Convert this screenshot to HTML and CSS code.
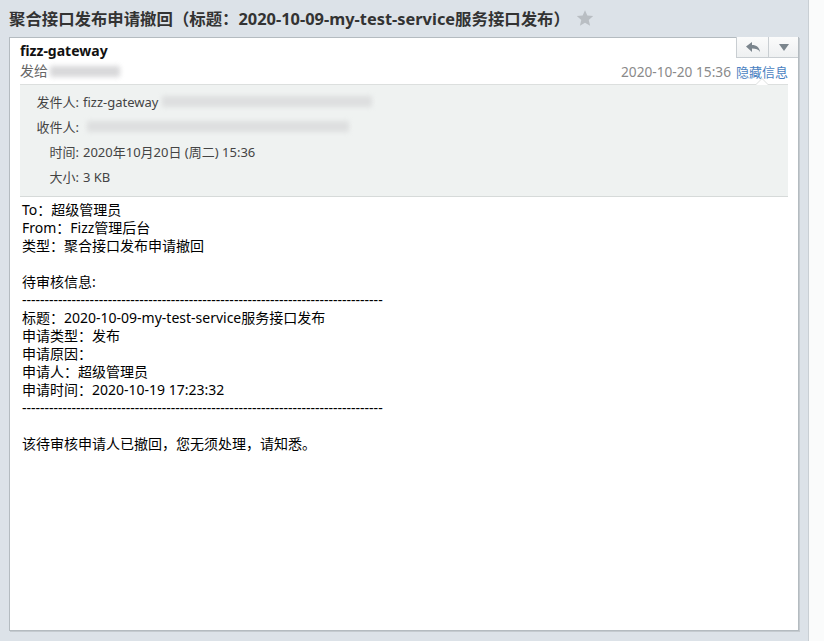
FILE: index.html
```html
<!DOCTYPE html>
<html lang="zh-CN">
<head>
<meta charset="utf-8">
<title>聚合接口发布申请撤回</title>
<link rel="stylesheet" href="styles.css">
</head>
<body>
<div class="page">
  <main class="main">
    <div class="subject">
      <h1 class="subject-text">聚合接口发布申请撤回（标题：2020-10-09-my-test-service服务接口发布）</h1>
      <svg class="star" width="18" height="18" viewBox="0 0 24 24"><path d="M12 1.5l3.1 7.2 7.8.7-5.9 5.2 1.8 7.7L12 18.3l-6.8 4 1.8-7.7-5.9-5.2 7.8-.7z" fill="#b9bec3"/></svg>
    </div>
    <section class="card">
      <header class="head">
        <div class="head-left">
          <div class="sender">fizz-gateway</div>
          <div class="to">发给<span class="blur blur-to"></span></div>
        </div>
        <div class="head-right">
          <div class="btns">
            <button class="btn btn-reply"><svg width="16" height="12" viewBox="0 0 16 12"><path d="M1 5.5L7 1v3c4.5 0 7.5 2.2 8 7-1.6-2.6-4-3.4-8-3.4V11z" fill="#7b858d"/></svg></button>
            <button class="btn btn-more"><svg width="10" height="7" viewBox="0 0 10 7"><path d="M0 0h10L5 7z" fill="#7b858d"/></svg></button>
          </div>
          <div class="meta"><span class="date">2020-10-20 15:36</span><a class="toggle">隐藏信息</a></div>
        </div>
      </header>
      <div class="details">
        <div class="row"><span class="lbl">发件人:</span><span class="val">fizz-gateway<span class="blur blur-from"></span></span></div>
        <div class="row"><span class="lbl">收件人:</span><span class="val"><span class="blur blur-rcpt"></span></span></div>
        <div class="row"><span class="lbl">时间:</span><span class="val">2020年10月20日 (周二) 15:36</span></div>
        <div class="row"><span class="lbl">大小:</span><span class="val">3 KB</span></div>
      </div>
      <div class="body">
        <p class="line">To：超级管理员</p>
        <p class="line">From：Fizz管理后台</p>
        <p class="line">类型：聚合接口发布申请撤回</p>
        <p class="line">&nbsp;</p>
        <p class="line">待审核信息:</p>
        <p class="line">--------------------------------------------------------------------------------</p>
        <p class="line">标题：2020-10-09-my-test-service服务接口发布</p>
        <p class="line">申请类型：发布</p>
        <p class="line">申请原因：</p>
        <p class="line">申请人：超级管理员</p>
        <p class="line">申请时间：2020-10-19 17:23:32</p>
        <p class="line">--------------------------------------------------------------------------------</p>
        <p class="line">&nbsp;</p>
        <p class="line">该待审核申请人已撤回，您无须处理，请知悉。</p>
      </div>
    </section>
  </main>
  <aside class="strip"></aside>
</div>
</body>
</html>
```
FILE: styles.css
```css
* { box-sizing: border-box; }
html, body { margin: 0; padding: 0; height: 100%; }
body {
  font-family: "Noto Sans", "Noto Sans CJK SC", sans-serif;
  color: #000;
  background: #fafbfb;
}
.page { display: flex; height: 641px; }
.main {
  width: 809px;
  background: #dce2e8;
  border-right: 1px solid #c9cfd4;
  display: flex;
  flex-direction: column;
  padding: 0 9px 10px 9px;
}
.strip { flex: 1; background: #fafbfb; }
.subject {
  height: 37px;
  display: flex;
  align-items: center;
  gap: 6px;
}
.subject-text {
  margin: 0;
  font-size: 16.4px;
  font-weight: bold;
  color: #333;
  line-height: 20px;
}
.star { margin-top: -1px; }
.card {
  flex: 1;
  background: #fff;
  border: 1px solid #b4bbc0;
  box-shadow: 1px 1px 0 #c4cacf;
  display: flex;
  flex-direction: column;
}
.head {
  display: flex;
  justify-content: space-between;
  padding: 0 0 0 10px;
  height: 46px;
}
.head-left { padding-top: 4px; }
.sender { font-size: 14px; font-weight: bold; line-height: 18px; color: #111; }
.to { font-size: 14px; line-height: 18px; color: #666; margin-top: 2px; display: flex; align-items: center; }
.blur {
  display: inline-block;
  background: #cfcfd1;
  filter: blur(2.5px);
  height: 11px;
  vertical-align: middle;
}
.blur-to { width: 70px; margin-left: 2px; opacity: .8; }
.blur-from { width: 210px; margin-left: 4px; opacity: .55; }
.blur-rcpt { width: 262px; margin-left: 4px; opacity: .55; }
.head-right {
  display: flex;
  flex-direction: column;
  align-items: flex-end;
}
.btns { display: flex; margin-top: -1px; }
.btn {
  height: 21px;
  width: 31px;
  border: 1px solid #c9ced2;
  border-top: none;
  background: linear-gradient(#fbfbfb, #eef0f1);
  padding: 0;
  display: flex;
  align-items: center;
  justify-content: center;
  margin: 0;
}
.btn-reply { border-right: none; width: 32px; }
.btn-more { border-right: none; width: 30px; }
.meta {
  line-height: 18px;
  margin-top: 4px;
  padding-right: 10px;
}
.date { color: #8a8a8a; margin-right: 5px; font-size: 13.7px; }
.toggle { color: #4a7fc1; cursor: pointer; font-size: 13px; }
.details {
  position: relative;
  margin: 0 10px;
  background: #eff2f1;
  border-top: 1px solid #dcdfde;
  border-bottom: 1px solid #d6dad9;
  padding: 4px 0 7px 0;
  font-size: 13px;
  color: #444;
}
.details::before, .details::after {
  content: "";
  position: absolute;
  right: 20px;
  width: 0; height: 0;
  border-left: 6px solid transparent;
  border-right: 6px solid transparent;
}
.details::before { top: -7px; border-bottom: 6px solid #dcdfde; }
.details::after { top: -6px; border-bottom: 6px solid #fff; }
.row { display: flex; height: 25px; align-items: center; }
.lbl { width: 59px; text-align: right; flex: none; }
.val { margin-left: 4px; display: flex; align-items: center; }
.body { padding: 4px 12px 0 12px; font-size: 14px; line-height: 18px; }
.line { margin: 0; white-space: pre; }
```
